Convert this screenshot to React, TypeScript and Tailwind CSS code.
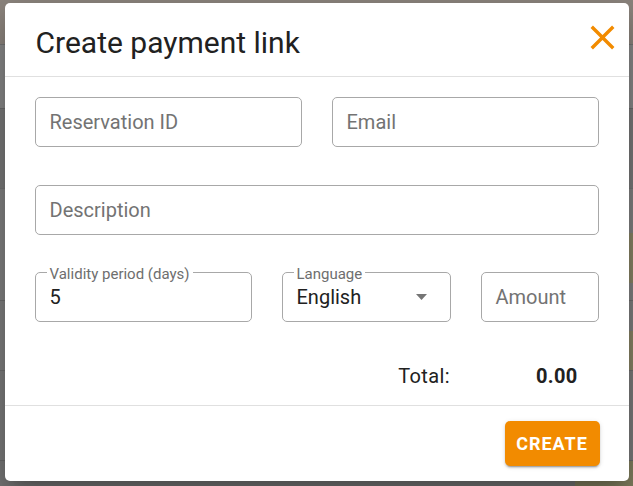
import React from 'react';

const font = { fontFamily: 'Roboto, "Liberation Sans", Arial, sans-serif' };

interface FieldProps {
  label: string;
  value?: string;
  width: string;
  select?: boolean;
}

const Field: React.FC<FieldProps> = ({ label, value, width, select }) => {
  const filled = value !== undefined;
  return (
    <div
      className={`relative flex h-[50px] items-center rounded-[5px] border border-[#a8a8a8] pl-[14px] ${width}`}
    >
      {filled && (
        <span className="absolute -top-[8px] left-[11px] bg-white px-[3px] text-[15px] leading-[18px] text-[#6e6e6e]">
          {label}
        </span>
      )}
      <span
        className={`text-[20px] leading-[24px] ${filled ? 'text-[#212121]' : 'text-[#737373]'}`}
      >
        {filled ? value : label}
      </span>
      {select && (
        <svg
          className="absolute right-[23px] top-[21px]"
          width="11"
          height="6"
          viewBox="0 0 11 6"
        >
          <path d="M0 0h11L5.5 6z" fill="#757575" />
        </svg>
      )}
    </div>
  );
};

const Backdrop: React.FC = () => (
  <div className="flex h-[486px] flex-col bg-[#7e7e7e]">
    <div className="h-[44px] bg-[#8d857e]" />
    <div className="h-[64px] border-t border-[#747474] bg-[#898989]" />
    <div className="h-[80px] border-t border-[#6c6c6c] bg-[#7a7a7a]" />
    <div className="flex h-[112px] border-t border-[#747474] bg-[#828282]">
      <div className="flex-1" />
      <div className="mt-[44px] h-[50px] w-[6px] bg-[#8a8566]" />
    </div>
    <div className="flex h-[70px] border-t border-[#6e6e6e] bg-[#7f7f7f]">
      <div className="flex-1" />
      <div className="mt-[30px] h-[40px] w-[6px] bg-[#8a8566]" />
    </div>
    <div className="h-[90px] border-t border-[#6e6e6e] bg-[#7c7c7c]" />
    <div className="flex flex-1 border-t border-[#6a6a6a] bg-[#777777]">
      <div className="flex-1" />
      <div className="w-[58px] bg-[#838060]" />
    </div>
  </div>
);

export default function App() {
  return (
    <div className="relative h-[486px] w-[633px] overflow-hidden" style={font}>
      <Backdrop />

      <div className="absolute inset-0 flex justify-center pt-[3px]">
        <div className="flex h-[478px] w-[624px] flex-col rounded-[5px] bg-white shadow-[0_11px_15px_-7px_rgba(0,0,0,0.2),0_24px_38px_3px_rgba(0,0,0,0.14),0_9px_46px_8px_rgba(0,0,0,0.12)]">
          <div className="flex h-[73px] items-start justify-between pl-[31px]">
            <h2 className="pt-[22px] text-[30px] font-normal leading-[36px] text-[#212121]">
              Create payment link
            </h2>
            <button className="mr-[6px] mt-[14px]" aria-label="close">
              <svg width="41" height="41" viewBox="0 0 24 24">
                <path
                  d="M19 6.41 17.59 5 12 10.59 6.41 5 5 6.41 10.59 12 5 17.59 6.41 19 12 13.41 17.59 19 19 17.59 13.41 12z"
                  fill="#f28b00"
                />
              </svg>
            </button>
          </div>

          <div className="border-t border-[#e0e0e0] px-[30px] pt-[20px]">
            <div className="flex gap-[30px]">
              <Field label="Reservation ID" width="w-[267px]" />
              <Field label="Email" width="w-[267px]" />
            </div>
            <div className="mt-[38px] flex">
              <Field label="Description" width="w-[564px]" />
            </div>
            <div className="mt-[37px] flex gap-[30px]">
              <Field label="Validity period (days)" value="5" width="w-[217px]" />
              <Field label="Language" value="English" width="w-[169px]" select />
              <Field label="Amount" width="w-[118px]" />
            </div>
            <div className="mt-[42px] flex justify-end gap-[86px] pb-[17px] pr-[21px] text-[20px] leading-[24px] text-[#212121]">
              <span className="tracking-[0.4px]">Total:</span>
              <span className="font-bold tracking-[0.3px]">0.00</span>
            </div>
          </div>

          <div className="flex justify-end border-t border-[#e0e0e0] pr-[29px] pt-[15px]">
            <button className="flex h-[45px] w-[95px] items-center justify-center rounded-[5px] bg-[#f28b00] text-[18px] font-bold tracking-[1px] text-white shadow-[0_3px_1px_-2px_rgba(0,0,0,0.2),0_2px_2px_0_rgba(0,0,0,0.14),0_1px_5px_0_rgba(0,0,0,0.12)]">
              CREATE
            </button>
          </div>
        </div>
      </div>
    </div>
  );
}
